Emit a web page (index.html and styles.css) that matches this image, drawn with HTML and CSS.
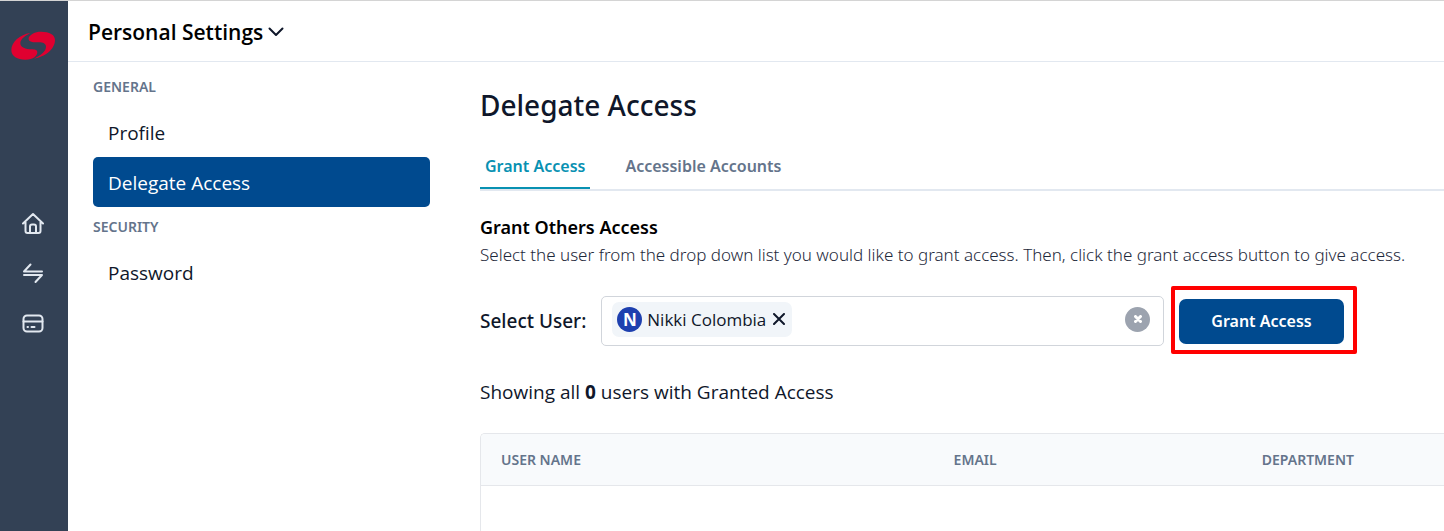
FILE: index.html
```html
<!DOCTYPE html>
<html lang="en">
<head>
    <meta charset="UTF-8">
    <meta name="viewport" content="width=device-width, initial-scale=1.0">
    <title>Personal Settings</title>

    <link rel="stylesheet" href="styles.css">
</head>
<body>

    <!-- Main navigation -->
    <nav class="rail" aria-label="Main">
        <a class="logo" href="#" aria-label="Start">
            <svg width="44" height="29" viewBox="33 94 132 87" fill="#e00030">
                <path d="M91 100C60 104 34 128 34 151c0 19 18 29 42 29 25 0 36-12 36-22 0-7-7-9-17-9-18 0-34-5-34-18 0-12 13-22 30-31z"/>
                <path d="M86 114C91 104 104 96 123 96c25 0 42 9 42 25 0 28-31 51-63 56 22-11 36-23 36-36 0-9-9-13-21-13-16 0-34 0-31-14z"/>
            </svg>
        </a>
        <a class="rail-link" href="#" aria-label="Home">
            <svg width="22" height="22" viewBox="0 0 22 22">
                <path d="M1 11.5L11 2l10 9.500M3.500 10V19q0 2 2 2h11q2 0 2-2V10M8 21V14.500q0-2 2-2h2q2 0 2 2V21"/>
            </svg>
        </a>
        <a class="rail-link" href="#" aria-label="Transfers">
            <svg width="22" height="22" viewBox="0 0 22 22">
                <path d="M8.500 2.500L2 9.500h18M2 13h18L13.500 20"/>
            </svg>
        </a>
        <a class="rail-link" href="#" aria-label="Cards">
            <svg width="22" height="22" viewBox="0 0 22 22">
                <rect x="1.500" y="3.500" width="19" height="16" rx="3.500"/>
                <path d="M1.500 9.500h19M5.500 15h.5M9.500 15h3"/>
            </svg>
        </a>
    </nav>

    <div class="page">
        <header class="topbar">
            <button class="menu-button" type="button">
                Personal Settings
                <svg width="16" height="10" viewBox="0 0 16 10"><path d="M1.500 1.500L8 8l6.500-6.500"/></svg>
            </button>
        </header>

        <div class="columns">
            <nav class="side" aria-label="Settings">
                <h2 class="side-title">GENERAL</h2>
                <a class="side-link" href="#">Profile</a>
                <a class="side-link active" href="#">Delegate Access</a>
                <h2 class="side-title">SECURITY</h2>
                <a class="side-link" href="#">Password</a>
            </nav>

            <main class="content">
                <h1>Delegate Access</h1>

                <div class="tabs">
                    <button class="tab selected" type="button">Grant Access</button>
                    <button class="tab" type="button">Accessible Accounts</button>
                </div>

                <h2 class="section-title">Grant Others Access</h2>
                <p class="help">Select the user from the drop down list you would like to grant access. Then, click the grant access button to give access.</p>

                <form class="grant-form">
                    <label for="user">Select User:</label>
                    <div class="picker">
                        <span class="chip">
                            <span class="avatar">N</span>
                            Nikki Colombia
                            <button class="chip-remove" type="button" aria-label="Remove Nikki Colombia">
                                <svg width="12" height="12" viewBox="0 0 12 12"><path d="M1 1l10 10M11 1L1 11"/></svg>
                            </button>
                        </span>
                        <input id="user" type="text" autocomplete="off">
                        <button class="clear" type="button" aria-label="Clear">
                            <svg width="8" height="8" viewBox="0 0 8 8"><path d="M1.500 1.500l5 5M6.500 1.500l-5 5"/></svg>
                        </button>
                    </div>
                    <div class="highlight">
                        <button class="grant" type="button">Grant Access</button>
                    </div>
                </form>

                <p class="summary">Showing all <b>0</b> users with Granted Access</p>

                <div class="table-box">
                    <table>
                        <thead>
                            <tr>
                                <th class="col-name">USER NAME</th>
                                <th class="col-email">EMAIL</th>
                                <th>DEPARTMENT</th>
                            </tr>
                        </thead>
                        <tbody></tbody>
                    </table>
                </div>
            </main>
        </div>
    </div>

</body>
</html>
```
FILE: styles.css
```css
* {
    box-sizing: border-box;
}
body {
    margin: 0;
    min-height: 100vh;
    display: flex;
    border-top: 1px solid #d4d4d4;
    background-color: #fff;
    color: #0f172a;
    font-family: "Open Sans", "Noto Sans", sans-serif;
    font-size: 19px;
}
h1, h2, p {
    margin: 0;
}
h1, h2, th, label, .tab, .grant, .help {
    font-family: "Noto Sans", "Open Sans", sans-serif;
    font-weight: 600;
}
a {
    text-decoration: none;
}
button {
    padding: 0;
    border: none;
    background: none;
    font-family: inherit;
    cursor: pointer;
}
svg {
    display: block;
}
svg path, svg rect {
    stroke-linecap: round;
    stroke-linejoin: round;
}

/* Left bar */
.rail {
    flex: none;
    width: 68px;
    padding: 30px 2px 0 0;
    display: flex;
    flex-direction: column;
    align-items: center;
    gap: 28px;
    background-color: #334155;
}
.logo {
    margin-bottom: 124px;
}
.rail-link svg {
    fill: none;
    stroke: #e2e8f0;
    stroke-width: 2;
}

.page {
    flex: 1;
    min-width: 0;
    display: flex;
    flex-direction: column;
}
.topbar {
    height: 61px;
    padding: 2px 0 0 20px;
    display: flex;
    align-items: center;
    border-bottom: 1px solid #e2e8f0;
}
.menu-button {
    display: flex;
    align-items: center;
    gap: 5px;
    color: #000;
    font-size: 21px;
    font-weight: 600;
}
.menu-button svg {
    fill: none;
    stroke: #0f172a;
    stroke-width: 2;
}
.columns {
    flex: 1;
    display: flex;
    gap: 50px;
    padding-left: 25px;
}

/* Settings menu */
.side {
    flex: none;
    width: 337px;
    padding-top: 5px;
}
.side-title {
    color: #64748b;
    font-size: 14px;
    line-height: 40px;
}
.side-link {
    display: block;
    padding: 2px 15px 0;
    border-radius: 5px;
    color: #0f172a;
    line-height: 48px;
}
.side-link.active {
    background-color: #004a8f;
    color: #fff;
}

/* Content */
.content {
    flex: 1;
    min-width: 0;
    padding-top: 23px;
    display: flex;
    flex-direction: column;
}
h1 {
    font-size: 28px;
    line-height: 40px;
    font-weight: 500;
}
.tabs {
    margin-top: 19px;
    display: flex;
    gap: 30px;
    border-bottom: 2px solid #e2e8f0;
}
.tab {
    height: 45px;
    padding: 0 5px;
    border-bottom: 2px solid transparent;
    color: #64748b;
    font-size: 16px;
}
.tab.selected {
    border-color: #0891b2;
    color: #0891b2;
}
.section-title {
    margin-top: 22px;
    color: #000;
    font-size: 18px;
    line-height: 28px;
}
.help {
    color: #1e293b;
    font-size: 17px;
    line-height: 28px;
    font-weight: 300;
}
.grant-form {
    margin-top: 27px;
    display: flex;
    align-items: center;
    gap: 15px;
}
.grant-form label {
    font-weight: 500;
}
.picker {
    flex: 1;
    max-width: 563px;
    height: 50px;
    padding: 0 13px 4px 10px;
    display: flex;
    align-items: center;
    border: 1px solid #d1d5db;
    border-radius: 5px;
}
.picker input {
    flex: 1;
    min-width: 0;
    border: none;
    outline: none;
    font: inherit;
}
.chip {
    height: 35px;
    padding: 0 7px 0 5px;
    display: flex;
    align-items: center;
    gap: 5px;
    border-radius: 7px;
    background-color: #f1f5f9;
    font-size: 17px;
}
.avatar {
    width: 25px;
    height: 25px;
    border-radius: 50%;
    background-color: #1e40af;
    color: #fff;
    font-weight: 700;
    line-height: 25px;
    text-align: center;
}
.chip-remove {
    padding-left: 2px;
}
.chip-remove svg {
    fill: none;
    stroke: #0f172a;
    stroke-width: 2;
}
.clear {
    width: 25px;
    height: 25px;
    display: grid;
    place-items: center;
    border-radius: 50%;
    background-color: #9ca3af;
}
.clear svg {
    stroke: #fff;
    stroke-width: 3;
}
.highlight {
    position: relative;
}
/* Red frame around the button */
.highlight::after {
    content: "";
    position: absolute;
    inset: -13px -13px -10px -8px;
    border: 4px solid #f00;
    border-radius: 2px;
    pointer-events: none;
}
.grant {
    display: block;
    height: 45px;
    padding: 0 32px;
    border-radius: 7px;
    background-color: #004a8f;
    color: #fff;
    font-size: 16px;
}
.summary {
    margin-top: 32px;
    line-height: 28px;
}
.table-box {
    flex: 1;
    margin-top: 27px;
    border: 1px solid #e5e7eb;
    border-width: 1px 0 0 1px;
    border-radius: 5px 0 0 0;
    overflow: hidden;
}
table {
    width: 100%;
    border-collapse: collapse;
    table-layout: fixed;
}
th {
    height: 51px;
    padding: 0 20px;
    border-bottom: 1px solid #e5e7eb;
    background-color: #f8fafc;
    color: #64748b;
    font-size: 14px;
    text-align: left;
}
.col-name {
    width: 47%;
}
.col-email {
    width: 32%;
}
```
